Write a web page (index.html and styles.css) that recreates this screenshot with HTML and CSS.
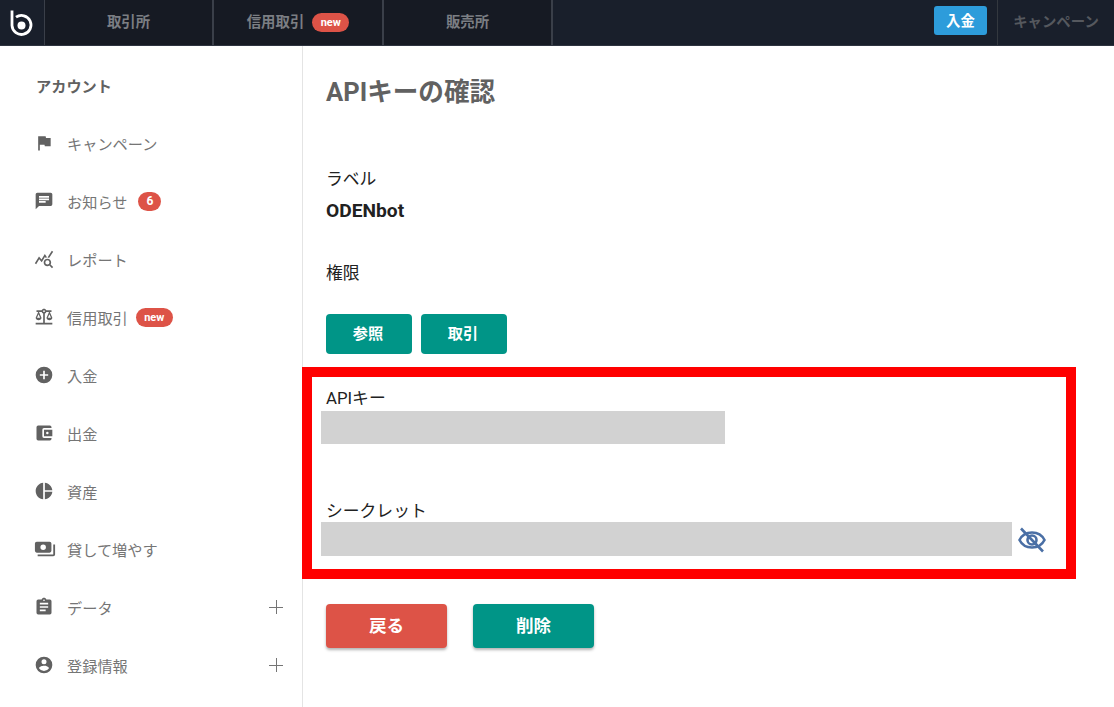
FILE: index.html
```html
<!DOCTYPE html>
<html lang="ja">
<head>
<meta charset="utf-8">
<title>APIキーの確認</title>
<link rel="stylesheet" href="styles.css">
</head>
<body>
<header class="topbar">
  <a class="logo"><svg width="24" height="28" viewBox="0 0 24 28"><path d="M2 1.500V16.500A9.500 9.500 0 1 0 6 8.200" fill="none" stroke="#fff" stroke-width="2.800"/><circle cx="11.500" cy="16.500" r="4" fill="#fff"/></svg></a>
  <a class="tab">取引所</a>
  <a class="tab tab-mid">信用取引<span class="pill pill-top">new</span></a>
  <a class="tab">販売所</a>
  <div class="spacer"></div>
  <a class="deposit">入金</a>
  <a class="campaign">キャンペーン</a>
</header>
<div class="layout">
  <nav class="sidebar">
    <h2 class="side-title">アカウント</h2>
    <ul class="menu">
      <li class="item"><svg class="ico" viewBox="0 0 24 24"><path d="M14.400 6 14 4H5v17h2v-7h5.600l.4 2h7V6z"/></svg><span>キャンペーン</span></li>
      <li class="item"><svg class="ico" viewBox="0 0 24 24"><path d="M20 2H4a2 2 0 0 0-2 2v18l4-4h14a2 2 0 0 0 2-2V4a2 2 0 0 0-2-2zM6 9h12v2H6zm8 5H6v-2h8zm4-6H6V6h12z"/></svg><span>お知らせ</span><span class="count">6</span></li>
      <li class="item"><svg class="ico" viewBox="0 0 24 24"><path d="M19.880 18.470c.44-.7.7-1.510.7-2.390 0-2.490-2.010-4.500-4.500-4.500s-4.500 2.010-4.500 4.500 2.010 4.500 4.490 4.500c.88 0 1.700-.26 2.390-.7L21.580 23 23 21.580zm-3.800.11a2.500 2.500 0 0 1 0-5 2.500 2.500 0 0 1 0 5zm-.36-8.500c-.74.02-1.450.18-2.100.45l-.55-.83-3.800 6.180-3.010-3.520-3.630 5.810L1 17l5-8 3 3.500L13 6zm2.590.5c-.64-.28-1.330-.45-2.050-.49L21.380 2 23 3.180z"/></svg><span>レポート</span></li>
      <li class="item"><svg class="ico" viewBox="0 0 24 24"><path d="M13 7.800c.9-.3 1.500-1 1.800-1.800H18l-3 7c0 1.700 1.600 3 3.500 3s3.500-1.300 3.500-3l-3-7h2V4h-6.200C14.400 2.800 13.300 2 12 2s-2.400.8-2.800 2H3v2h2l-3 7c0 1.700 1.600 3 3.500 3S9 14.700 9 13L6 6h3.200c.3.800.9 1.500 1.800 1.800V19H2v2h20v-2h-9zM20.400 13h-3.800l1.900-4.400zM7.400 13H3.600l1.900-4.400zM12 6a1 1 0 1 1 0-2 1 1 0 0 1 0 2z"/></svg><span>信用取引</span><span class="pill">new</span></li>
      <li class="item"><svg class="ico" viewBox="0 0 24 24"><path d="M12 2a10 10 0 1 0 0 20 10 10 0 0 0 0-20zm5 11h-4v4h-2v-4H7v-2h4V7h2v4h4z"/></svg><span>入金</span></li>
      <li class="item"><svg class="ico" viewBox="0 0 24 24"><path d="M21 18v1a2 2 0 0 1-2 2H5a2 2 0 0 1-2-2V5a2 2 0 0 1 2-2h14a2 2 0 0 1 2 2v1h-9a2 2 0 0 0-2 2v8a2 2 0 0 0 2 2zm-9-2h10V8H12zm4-2.500a1.500 1.500 0 1 1 0-3 1.500 1.500 0 0 1 0 3z"/></svg><span>出金</span></li>
      <li class="item"><svg class="ico" viewBox="0 0 24 24"><path d="M11 2v20c-5.070-.5-9-4.790-9-10s3.930-9.500 9-10zm2.030 0v8.990H22c-.47-4.740-4.240-8.520-8.970-8.990zm0 11.010V22c4.740-.47 8.500-4.250 8.970-8.990z"/></svg><span>資産</span></li>
      <li class="item"><svg class="ico ico-wide" viewBox="0 0 24 24"><path d="M19 14V6a2 2 0 0 0-2-2H3a2 2 0 0 0-2 2v8a2 2 0 0 0 2 2h14a2 2 0 0 0 2-2zm-9-1a3 3 0 1 1 0-6 3 3 0 0 1 0 6zm13-6v11a2 2 0 0 1-2 2H4v-2h17V7z"/></svg><span>貸して増やす</span></li>
      <li class="item"><svg class="ico" viewBox="0 0 24 24"><path d="M19 3h-4.180C14.400 1.840 13.300 1 12 1s-2.400.84-2.820 2H5a2 2 0 0 0-2 2v14a2 2 0 0 0 2 2h14a2 2 0 0 0 2-2V5a2 2 0 0 0-2-2zm-7 0a1 1 0 1 1 0 2 1 1 0 0 1 0-2zm2 14H7v-2h7zm3-4H7v-2h10zm0-4H7V7h10z"/></svg><span>データ</span><span class="plus"></span></li>
      <li class="item"><svg class="ico" viewBox="0 0 24 24"><path d="M12 2a10 10 0 1 0 0 20 10 10 0 0 0 0-20zm0 3a3 3 0 1 1 0 6 3 3 0 0 1 0-6zm0 14.200a7.200 7.200 0 0 1-6-3.220c.03-1.990 4-3.080 6-3.080s5.970 1.090 6 3.080a7.200 7.200 0 0 1-6 3.220z"/></svg><span>登録情報</span><span class="plus"></span></li>
    </ul>
  </nav>
  <main class="main">
    <h1 class="title">APIキーの確認</h1>
    <div class="label label-first">ラベル</div>
    <div class="value">ODENbot</div>
    <div class="label label-perm">権限</div>
    <div class="perms">
      <span class="perm">参照</span>
      <span class="perm">取引</span>
    </div>
    <section class="marked">
      <div class="label">APIキー</div>
      <div class="mask mask-key"></div>
      <div class="label label-secret">シークレット</div>
      <div class="secret-row">
        <div class="mask mask-secret"></div>
        <svg class="eye" viewBox="0 0 28 26" fill="none" stroke="#4a6fa5" stroke-width="2.600"><path d="M1.500 13C4 8 8.500 5.500 14 5.500S24 8 26.500 13C24 18 19.500 20.500 14 20.500S4 18 1.500 13z"/><circle cx="14" cy="13" r="4.500"/><path d="M3 1.500l22 23" stroke-width="2.600"/></svg>
      </div>
    </section>
    <div class="actions">
      <a class="action action-back">戻る</a>
      <a class="action action-delete">削除</a>
    </div>
  </main>
</div>
</body>
</html>
```
FILE: styles.css
```css
* { box-sizing: border-box; }
html, body { margin: 0; height: 100%; overflow: hidden; }
body {
  font-family: Roboto, "Noto Sans CJK JP", sans-serif;
  background: #fff;
  color: #212121;
}
.topbar {
  display: flex;
  align-items: stretch;
  height: 46px;
  background: #191f2b;
  border-bottom: 1px solid #2e3440;
}
.logo {
  width: 45px;
  display: flex;
  align-items: center;
  justify-content: center;
  padding-right: 1px;
  border-right: 1px solid #3a3f49;
}
.tab {
  width: 169px;
  display: flex;
  align-items: center;
  justify-content: center;
  padding-bottom: 4px;
  background: #161a23;
  color: #7b7e83;
  font-size: 14.4px;
  font-weight: 700;
  border-right: 2px solid #3a3f49;
}
.tab-mid { width: 170px; }
.spacer { flex: 1; }
.pill {
  display: inline-flex;
  align-items: center;
  justify-content: center;
  width: 37px;
  height: 19px;
  margin-left: 8px;
  border-radius: 10px;
  background: #dd5347;
  color: #fff;
  font-size: 11px;
  font-weight: 700;
}
.pill-top { margin-top: 4px; }
.deposit {
  align-self: flex-start;
  width: 53px;
  height: 29px;
  margin: 6px 10px 0 0;
  padding-bottom: 2px;
  display: flex;
  align-items: center;
  justify-content: center;
  border-radius: 3px;
  background: #2d9cdb;
  color: #fff;
  font-size: 14.4px;
  font-weight: 700;
}
.campaign {
  width: 117px;
  display: flex;
  align-items: center;
  justify-content: center;
  padding-bottom: 5px;
  border-left: 1px solid #33383f;
  color: #55585e;
  font-size: 14.4px;
  font-weight: 700;
  white-space: nowrap;
}
.layout { display: flex; height: 661px; }
.sidebar {
  width: 303px;
  flex: none;
  padding: 31px 19px 0 36px;
  border-right: 1px solid #e4e4e4;
}
.side-title {
  margin: 0;
  height: 20px;
  font-size: 15.2px;
  line-height: 20px;
  font-weight: 700;
  color: #616161;
}
.menu { list-style: none; margin: 17px 0 0; padding: 0; }
.item {
  display: flex;
  align-items: center;
  height: 58px;
  font-size: 15.2px;
  color: #757575;
}
.ico {
  width: 20px;
  height: 20px;
  margin: 0 13px 0 -2px;
  flex: none;
  fill: #616161;
}
.ico-wide { width: 22px; height: 22px; margin: 0 11px 0 -2px; }
.count {
  width: 23px;
  height: 19px;
  margin-left: 11px;
  border-radius: 10px;
  background: #dd5347;
  color: #fff;
  font-size: 12px;
  font-weight: 700;
  display: flex;
  align-items: center;
  justify-content: center;
}
.plus {
  width: 14px;
  height: 14px;
  margin-left: auto;
  background:
    linear-gradient(#757575, #757575) center / 14px 1px no-repeat,
    linear-gradient(#757575, #757575) center / 1px 14px no-repeat;
}
.main { flex: 1; padding: 0 0 0 23px; min-width: 0; }
.title {
  margin: 31px 0 0;
  height: 30px;
  font-size: 25.6px;
  line-height: 30px;
  font-weight: 700;
  color: #616161;
}
.label { font-size: 16.8px; line-height: 20px; height: 20px; color: #212121; }
.label-first { margin-top: 62px; }
.value { margin-top: 12px; font-size: 19.2px; line-height: 20px; height: 20px; font-weight: 700; }
.label-perm { margin-top: 42px; }
.perms { display: flex; gap: 9px; margin-top: 31px; }
.perm {
  width: 86px;
  height: 40px;
  padding: 0 2px 4px 0;
  display: flex;
  align-items: center;
  justify-content: center;
  border-radius: 4px;
  background: #009587;
  color: #fff;
  font-size: 15.2px;
  font-weight: 700;
}
.marked {
  width: 774px;
  height: 212px;
  margin: 13px 0 0 -24px;
  padding: 11px 0 0 14px;
  border: 10px solid #f00;
}
.mask { background: #d2d2d2; margin-left: -5px; }
.mask-key { width: 404px; height: 33px; margin-top: 3px; }
.label-secret { margin-top: 57px; }
.secret-row { display: flex; align-items: center; margin-top: 1px; }
.mask-secret { width: 691px; height: 34px; flex: none; }
.eye { width: 28px; height: 26px; margin: 2px 0 0 6px; flex: none; }
.actions { display: flex; gap: 26px; margin-top: 25px; }
.action {
  width: 121px;
  height: 44px;
  padding-bottom: 4px;
  display: flex;
  align-items: center;
  justify-content: center;
  border-radius: 4px;
  color: #fff;
  font-size: 17.6px;
  font-weight: 700;
  box-shadow: 0 2px 3px rgba(0,0,0,.3);
}
.action-back { background: #dd5347; }
.action-delete { background: #009587; }
```
